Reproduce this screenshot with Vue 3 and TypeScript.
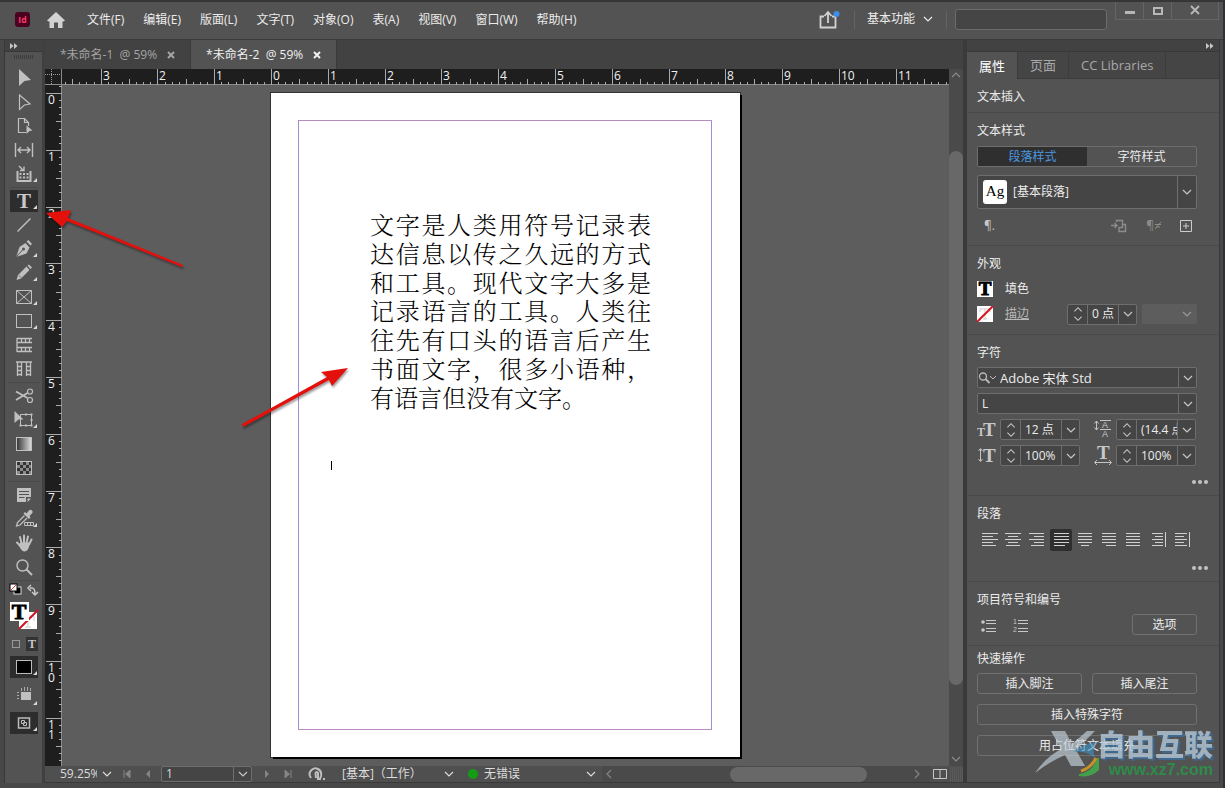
<script setup lang="ts">
import { ref } from 'vue'

interface Tool { id: string; label: string; more?: boolean }
interface Tick { pos: number; size: number; label: string }
interface Glyph { x: number; y: number; size: number; char: string }
interface Metric { label: string; value: string; glyphs: Glyph[]; sans?: boolean; d: string }

const menus = ['文件(F)', '编辑(E)', '版面(L)', '文字(T)', '对象(O)', '表(A)', '视图(V)', '窗口(W)', '帮助(H)']
const docTabs = ['*未命名-1  @ 59%', '*未命名-2  @ 59%']
const activeDoc = ref(1)
const activeTool = ref('type')

const toolGroups: Tool[][] = [
  [
    { id: 'select', label: '选择工具' },
    { id: 'direct', label: '直接选择工具' },
    { id: 'page', label: '页面工具' },
    { id: 'gap', label: '间隙工具' },
    { id: 'collect', label: '内容收集器工具', more: true },
  ],
  [
    { id: 'type', label: '文字工具', more: true },
    { id: 'line', label: '直线工具' },
    { id: 'pen', label: '钢笔工具', more: true },
    { id: 'pencil', label: '铅笔工具', more: true },
    { id: 'frame', label: '矩形框架工具', more: true },
    { id: 'rect', label: '矩形工具', more: true },
    { id: 'hgrid', label: '水平网格工具' },
    { id: 'vgrid', label: '垂直网格工具' },
  ],
  [
    { id: 'scissors', label: '剪刀工具' },
    { id: 'transform', label: '自由变换工具', more: true },
    { id: 'gradient', label: '渐变色板工具' },
    { id: 'feather', label: '渐变羽化工具' },
  ],
  [
    { id: 'note', label: '附注工具' },
    { id: 'dropper', label: '颜色主题工具', more: true },
    { id: 'hand', label: '抓手工具' },
    { id: 'zoom', label: '缩放显示工具' },
  ],
]

const INCH = 56.8
function makeTicks(origin: number, from: number, length: number): Tick[] {
  const list: Tick[] = []
  const to = Math.floor(((length - origin) / INCH) * 8)
  for (let i = from; i <= to; i++) {
    const major = i % 8 === 0
    list.push({
      pos: Math.round(origin + (i * INCH) / 8),
      size: major ? 16 : i % 4 === 0 ? 6 : 3,
      label: major ? String(Math.abs(i / 8)) : '',
    })
  }
  return list
}
const hTicks = makeTicks(209, -29, window.innerWidth - 339)
const vTicks = makeTicks(8, -1, window.innerHeight - 107)

const sample = '文字是人类用符号记录表达信息以传之久远的方式和工具。现代文字大多是记录语言的工具。人类往往先有口头的语言后产生书面文字，很多小语种，有语言但没有文字。'

const aligns = [
  { label: '左对齐', d: 'M4 4.5H20M4 7.5H15M4 10.5H20M4 13.5H15M4 16.5H18' },
  { label: '居中对齐', d: 'M3 4.5H19M6 7.5H16M3 10.5H19M6 13.5H16M4 16.5H18' },
  { label: '右对齐', d: 'M3 4.5H18M8 7.5H18M3 10.5H18M8 13.5H18M5 16.5H18' },
  { label: '双齐末行齐左', d: 'M4 4.5H19M4 7.5H19M4 10.5H19M4 13.5H19M4 16.5H15' },
  { label: '双齐末行居中', d: 'M4 4.5H18M4 7.5H18M4 10.5H18M4 13.5H18M7 16.5H15' },
  { label: '双齐末行齐右', d: 'M4 4.5H18M4 7.5H18M4 10.5H18M4 13.5H18M8 16.5H18' },
  { label: '全部强制双齐', d: 'M4 4.5H18M4 7.5H18M4 10.5H18M4 13.5H18M4 16.5H18' },
  { label: '朝向书脊对齐', d: 'M6 4.5H17M9 7.5H17M6 10.5H17M9 13.5H17M6 16.5H17M19.5 3V18' },
  { label: '背向书脊对齐', d: 'M5 4.5H17M5 7.5H14M5 10.5H17M5 13.5H14M5 16.5H17M19.5 3V18' },
]
const activeAlign = ref(3)
const styleMode = ref(0)

const family = ref('Adobe 宋体 Std')
const face = ref('L')
const metrics = ref<Metric[]>([
  { label: '字体大小', value: '12 点', glyphs: [{ x: 0, y: 17, size: 12, char: 'T' }, { x: 6, y: 17, size: 19, char: 'T' }], d: '' },
  { label: '行距', value: '(14.4 点)', sans: true, glyphs: [{ x: 9, y: 9, size: 9, char: 'A' }, { x: 9, y: 18, size: 9, char: 'A' }], d: 'M7 1.5H18M7 10.5H18M3.5 2V11M1.5 4.5L3.5 2L5.5 4.5M1.5 8.5L3.5 11L5.5 8.5' },
  { label: '垂直缩放', value: '100%', glyphs: [{ x: 6, y: 17, size: 19, char: 'T' }], d: 'M3.5 4V16M1.5 6L3.5 3.5L5.5 6M1.5 14L3.5 16.5L5.5 14' },
  { label: '水平缩放', value: '100%', glyphs: [{ x: 4, y: 14, size: 19, char: 'T' }], d: 'M2 17.5H18M4 15L1.5 17.5L4 20M16 15L18.5 17.5L16 20' },
])
const strokeWidth = ref('0 点')
const zoomLevel = ref('59.25%')
const pageNo = ref('1')
</script>

<template>
  <div class="window" lang="zh-CN">
    <svg class="sheet" aria-hidden="true">
      <symbol id="chev" viewBox="0 0 10 10"><path d="M1 3L5 7L9 3" fill="none" stroke="currentColor" stroke-width="1.2" /></symbol>
      <symbol id="spin" viewBox="0 0 10 20"><path d="M1 7L5 3L9 7M1 13L5 17L9 13" fill="none" stroke="currentColor" stroke-width="1.2" /></symbol>
      <symbol id="dbl" viewBox="0 0 8 8"><path d="M0 1L3.5 4L0 7zM4 1L7.5 4L4 7z" fill="currentColor" /></symbol>
      <symbol id="t-select" viewBox="0 0 30 24"><path d="M10 3L22 14L15.5 15L10 20z" fill="currentColor" /></symbol>
      <symbol id="t-direct" viewBox="0 0 30 24"><path d="M10.5 5L21 14L15.5 15L10.5 19.5z" fill="none" stroke="currentColor" stroke-width="1.2" /></symbol>
      <symbol id="t-page" viewBox="0 0 30 24"><path d="M17 18.5H9.5V4.5H15.5L19.5 8.5V12M15.5 4.5V8.5H19.5" fill="none" stroke="currentColor" stroke-width="1.2" /><path d="M17.5 11.5L23.5 16.5L20.5 17L17.5 20z" fill="currentColor" /></symbol>
      <symbol id="t-gap" viewBox="0 0 30 24"><path d="M6.5 5V19M23.5 5V19M9 12H21M12 9L9 12L12 15M18 9L21 12L18 15" fill="none" stroke="currentColor" stroke-width="1.4" /></symbol>
      <symbol id="t-collect" viewBox="0 0 30 24"><path d="M8.5 9V19H21.5V9" fill="none" stroke="currentColor" stroke-width="2" /><path d="M10.5 11h2v2h-2zM14 11h2v2h-2zM17.5 11h2v2h-2zM10.5 14.5h2v2h-2zM14 14.5h2v2h-2zM17.5 14.5h2v2h-2z" fill="currentColor" /><path d="M10 4L14 8M15 4.5V8.5H11" fill="none" stroke="currentColor" stroke-width="1.4" /></symbol>
      <symbol id="t-line" viewBox="0 0 30 24"><path d="M8.5 18.5L21.5 5.5" stroke="currentColor" stroke-width="1.5" /></symbol>
      <symbol id="t-pen" viewBox="0 0 30 24"><path d="M17.500 4.500L19.500 3L23 7L21.500 8.500z" fill="currentColor" /><path d="M16.5 6L20.5 10.5L17.5 16.5L8.5 19.5L7.5 19L10.5 10z" fill="currentColor" /><path d="M8 19L13.5 13" stroke="#535353" /><circle cx="14.5" cy="12" r="1.5" fill="#535353" /></symbol>
      <symbol id="t-pencil" viewBox="0 0 30 24"><path d="M18.5 4.5L20 3.5L23 6.5L21.5 8zM17.5 5.5L20.5 9L12 17.5L7.5 19L9 14z" fill="currentColor" /><path d="M10 14.5L12 16.5" stroke="#535353" stroke-width=".8" /></symbol>
      <symbol id="t-frame" viewBox="0 0 30 24"><path d="M7.5 5.5H22.5V18.5H7.5zL22.5 18.5M22.5 5.5L7.5 18.5" fill="none" stroke="currentColor" /></symbol>
      <symbol id="t-rect" viewBox="0 0 30 24"><rect x="7.5" y="5.5" width="15" height="13" fill="none" stroke="currentColor" /></symbol>
      <symbol id="t-hgrid" viewBox="0 0 30 24"><path d="M8 5V19M8 5.5H23M8 9.5H23M8 14.5H23M8 18.5H23M12.5 5.5V9.5M16.5 5.5V9.5M20.5 5.5V9.5M12.5 14.5V18.5M16.5 14.5V18.5M20.5 14.5V18.5" fill="none" stroke="currentColor" stroke-width="1.3" /></symbol>
      <symbol id="t-vgrid" viewBox="0 0 30 24"><path d="M7 5H23M8.5 5V19M12.5 5V19M17.5 5V19M21.5 5V19M8.5 9.5H12.5M8.5 13.5H12.5M8.5 17.5H12.5M17.5 9.5H21.5M17.5 13.5H21.5M17.5 17.5H21.5" fill="none" stroke="currentColor" stroke-width="1.3" /></symbol>
      <symbol id="t-scissors" viewBox="0 0 30 24"><path d="M7 7.5L18.5 14M7 16L18.5 9" fill="none" stroke="currentColor" stroke-width="1.8" /><circle cx="21" cy="7.5" r="2.5" fill="none" stroke="currentColor" stroke-width="1.2" /><circle cx="21" cy="16" r="2.5" fill="none" stroke="currentColor" stroke-width="1.2" /></symbol>
      <symbol id="t-transform" viewBox="0 0 30 24"><rect x="11.5" y="6.5" width="11" height="11" fill="none" stroke="currentColor" /><path d="M5.5 3L14.5 11.5H9.5L5.5 15zM21.500 5.500h2v2h-2zM21.500 16.500h2v2h-2zM10.500 16.500h2v2h-2zM16 5.500h2v2h-2zM21.500 11h2v2h-2zM16 16.500h2v2h-2z" fill="currentColor" /></symbol>
      <linearGradient id="ramp"><stop offset="0" stop-color="#333" /><stop offset="1" stop-color="#e0e0e0" /></linearGradient>
      <symbol id="t-gradient" viewBox="0 0 30 24"><rect x="7.5" y="5.5" width="15" height="13" fill="url(#ramp)" stroke="currentColor" /></symbol>
      <symbol id="t-feather" viewBox="0 0 30 24"><rect x="7.5" y="5.5" width="15" height="13" fill="#333" stroke="currentColor" /><path d="M11 6h3v3h-3zM17 6h3v3h-3zM8 9h3v3h-3zM14 9h3v3h-3zM20 9h2v3h-2zM11 12h3v3h-3zM17 12h3v3h-3zM8 15h3v3h-3zM14 15h3v3h-3zM20 15h2v3h-2z" fill="#8c8c8c" /></symbol>
      <symbol id="t-note" viewBox="0 0 30 24"><path d="M8 5H22V14H17V19H8zM18.5 15.5H22L18.5 19z" fill="currentColor" /><path d="M10 8.5H20M10 11.5H20M10 14.5H15.5" stroke="#535353" /></symbol>
      <symbol id="t-dropper" viewBox="0 0 30 24"><path d="M16 5L17.5 6.5L19.5 4Q21.5 2 23 3.5T22.5 7L20.5 9L21.5 10.5L20 12L14.5 6.5z" fill="currentColor" /><path d="M15.5 8.5L8.5 15.5L7.5 19L11 18L18 11" fill="none" stroke="currentColor" stroke-width="1.3" /><path d="M15.5 15.5H24.5V18.5H15.5zM18.5 15.5V18.5M21.5 15.5V18.5" fill="none" stroke="currentColor" /></symbol>
      <symbol id="t-hand" viewBox="0 0 30 24"><path d="M12.5 12L11 6M15 11.5V4.5M17.5 12L19 5.5M20 13.5L22.5 8.5M11.5 15L8 11.5" stroke="currentColor" stroke-width="2" stroke-linecap="round" /><path d="M11.5 11.5H20.5L20 16Q18.5 20.5 15 20.5Q12.5 20 9.5 14z" fill="currentColor" /></symbol>
      <symbol id="t-zoom" viewBox="0 0 30 24"><circle cx="13.5" cy="10.5" r="5.5" fill="none" stroke="currentColor" stroke-width="1.4" /><path d="M17.5 14.5L23 20" stroke="currentColor" stroke-width="2" /></symbol>
    </svg>

    <header class="menubar">
      <svg class="logo" viewBox="0 0 14 14" aria-label="InDesign"><rect width="14" height="14" rx="3" fill="#4a0220" /><text x="7" y="10" text-anchor="middle" font-size="8" font-weight="bold" font-family="Open Sans, sans-serif" fill="#ff3a6c">Id</text></svg>
      <button class="plain home" aria-label="主页"><svg width="18" height="16" viewBox="0 0 18 16"><path d="M9 0L18 8.5L16.5 9.5H15.5V16H11V10.5H7V16H2.5V9.5H1.5L0 8.5z" fill="#d2d2d2" /></svg></button>
      <nav class="menus"><button v-for="m in menus" :key="m" class="plain">{{ m }}</button></nav>
      <div class="right-tools">
        <button class="plain share" aria-label="共享"><svg width="22" height="20" viewBox="0 0 22 20"><path d="M6 6.5H2.5V17.5H17.5V6.5H14M10 13V3M6.5 6L10 2L13.5 6" fill="none" stroke="#d2d2d2" stroke-width="1.8" /><circle cx="18.5" cy="4" r="3" fill="#3b8eea" /></svg></button>
        <span class="bar"></span>
        <button class="plain workspace">基本功能<svg width="10" height="10"><use href="#chev" /></svg></button>
        <span class="bar"></span>
        <input class="search" type="search" aria-label="搜索" />
        <div class="winbtns">
          <button aria-label="最小化"><svg width="12" height="12" viewBox="0 0 12 12"><rect x="1" y="6" width="10" height="3" fill="#b8b8b8" /></svg></button>
          <button aria-label="最大化"><svg width="12" height="12" viewBox="0 0 12 12"><rect x="2" y="3" width="8" height="6" fill="none" stroke="#b8b8b8" stroke-width="2" /></svg></button>
          <button class="close" aria-label="关闭"><svg width="12" height="12" viewBox="0 0 12 12"><path d="M2 1L10 9M10 1L2 9" stroke="#b8b8b8" stroke-width="1.8" /></svg></button>
        </div>
      </div>
    </header>

    <div class="body">
      <aside class="toolbar">
        <div class="collapse"><svg width="8" height="8"><use href="#dbl" /></svg></div>
        <div class="grip"></div>
        <div v-for="(g, gi) in toolGroups" :key="gi" class="group">
          <button v-for="t in g" :key="t.id" class="tool" :class="{ on: activeTool === t.id }" :aria-label="t.label" @click="activeTool = t.id">
            <svg width="30" height="24">
              <text v-if="t.id === 'type'" class="slab" x="15" y="19" text-anchor="middle" font-size="21">T</text>
              <use v-else :href="'#t-' + t.id" />
              <path v-if="t.more" d="M28 16V20H24z" fill="#d8d8d8" />
            </svg>
          </button>
        </div>
        <div class="swatches">
          <svg width="30" height="50" viewBox="0 0 30 50" role="img" aria-label="填色和描边">
            <rect x="5" y="5" width="7" height="7" fill="#000" stroke="#ddd" /><rect x="1" y="2" width="7" height="7" fill="#fff" stroke="#000" /><path d="M2 8L7 3" stroke="#e03a3a" />
            <path d="M21 6H23Q26 6 26 12M22 3L19 6L22 9M23 10L26 13L29 10" fill="none" stroke="#c8c8c8" stroke-width="1.5" />
            <rect x="10" y="30" width="18" height="17" fill="#fff" /><path d="M13 34H25V39M19 34V45M16 45H22" fill="none" stroke="#ccc" /><path d="M10 47L29 28" stroke="#d01020" stroke-width="2" />
            <rect x="1" y="20" width="19" height="19" fill="#fff" /><text class="slab" x="10" y="37" text-anchor="middle" font-size="22" fill="#000" stroke="#000">T</text>
          </svg>
        </div>
        <div class="target">
          <button aria-label="格式针对容器"><svg width="12" height="12" viewBox="0 0 12 12"><rect x="2.5" y="2.5" width="7" height="7" fill="none" stroke="#999" /></svg></button>
          <button class="on" aria-label="格式针对文本"><svg width="12" height="12" viewBox="0 0 12 12"><text class="slab" x="6" y="10" text-anchor="middle" font-size="12">T</text></svg></button>
        </div>
        <button class="tool fill on" aria-label="应用颜色"><svg width="30" height="24" viewBox="0 0 30 24"><rect x="7.5" y="5.5" width="15" height="13" fill="#000" stroke="#bbb" /><path d="M28 16V20H24z" fill="#d8d8d8" /></svg></button>
        <button class="tool fill" aria-label="视图选项"><svg width="30" height="24" viewBox="0 0 30 24"><path d="M12 9H22V17H12z" fill="#c0c0c0" /><path d="M12.5 5V8M15.5 4V8M18.5 4V8M21.5 5V8M8 9.5H10M8 12.5H10M8 15.5H10" stroke="#aaa" /><path d="M28 18V22H24z" fill="#d8d8d8" /></svg></button>
        <button class="tool fill on" aria-label="屏幕模式"><svg width="30" height="24" viewBox="0 0 30 24"><rect x="9.5" y="7" width="11" height="10" fill="none" stroke="#bbb" stroke-width="1.5" /><path d="M12.5 9.5H15.5V12.5H12.5zM14.5 11.5H17.5V14.5H14.500z" fill="none" stroke="#bbb" /><path d="M28 16V20H24z" fill="#d8d8d8" /></svg></button>
      </aside>

      <main class="doc">
        <div class="doctabs">
          <div v-for="(d, i) in docTabs" :key="d" class="doctab" :class="{ on: activeDoc === i }">
            <button class="plain name" @click="activeDoc = i">{{ d }}</button>
            <button class="plain x" aria-label="关闭文档"><svg width="8" height="8" viewBox="0 0 8 8"><path d="M1 1L7 7M7 1L1 7" stroke="currentColor" stroke-width="2" /></svg></button>
          </div>
        </div>
        <div class="work">
          <svg class="corner" viewBox="0 0 17 16"><path d="M0 5.5H17M6.5 0V16" stroke="#999" stroke-dasharray="1 1" /><path d="M16.5 0V16M0 15.5H17" stroke="#8c8c8c" /></svg>
          <svg class="hruler">
            <line x1="0" x2="100%" y1="15.5" y2="15.5" stroke="#8c8c8c" />
            <g v-for="t in hTicks" :key="t.pos"><rect :x="t.pos" :y="16 - t.size" width="1" :height="t.size" fill="#aaa" /><text v-if="t.label" :x="t.pos + 2" y="11">{{ t.label }}</text></g>
          </svg>
          <div class="vscroll">
            <svg width="10" height="10" class="flip"><use href="#chev" /></svg>
            <div class="vthumb"></div>
            <svg width="10" height="10"><use href="#chev" /></svg>
          </div>
          <svg class="vruler">
            <line x1="16.5" x2="16.5" y1="0" y2="100%" stroke="#8c8c8c" />
            <g v-for="t in vTicks" :key="t.pos"><rect :x="17 - t.size" :y="t.pos" :width="t.size" height="1" fill="#aaa" /><text v-for="(c, ci) in t.label" :key="ci" x="3" :y="t.pos + 11 + ci * 10">{{ c }}</text></g>
          </svg>
          <div class="canvas">
            <article class="sheet-page">
              <div class="margins">
                <p class="story">{{ sample }}</p>
                <div class="caret"></div>
              </div>
            </article>
          </div>
        </div>
        <footer class="status">
          <input v-model="zoomLevel" class="zoomlevel" aria-label="缩放级别" />
          <button class="plain" aria-label="缩放列表"><svg width="10" height="10"><use href="#chev" /></svg></button>
          <div class="pager">
            <button class="plain" aria-label="首页"><svg width="8" height="8" viewBox="0 0 8 8"><path d="M1 0V8M7 0V8L2.5 4z" fill="#858585" stroke="#858585" /></svg></button>
            <button class="plain" aria-label="上一页"><svg width="8" height="8" viewBox="0 0 8 8"><path d="M6 0V8L2 4z" fill="#858585" /></svg></button>
          </div>
          <div class="combo pageno"><input v-model="pageNo" aria-label="页码" /><button aria-label="页码列表"><svg width="10" height="10"><use href="#chev" /></svg></button></div>
          <div class="pager">
            <button class="plain" aria-label="下一页"><svg width="8" height="8" viewBox="0 0 8 8"><path d="M2 0V8L6 4z" fill="#858585" /></svg></button>
            <button class="plain" aria-label="末页"><svg width="8" height="8" viewBox="0 0 8 8"><path d="M7 0V8M1 0V8L5.5 4z" fill="#858585" stroke="#858585" /></svg></button>
          </div>
          <button class="plain open" aria-label="打开"><svg width="18" height="14" viewBox="0 0 18 14"><path d="M3 11Q0 7 3 3.5T10 2Q14 4 13 9L12 12H10V6Q9 4 7.5 6L8 11" fill="none" stroke="#bdbdbd" stroke-width="2" /><rect x="15" y="11" width="2" height="2" fill="#bdbdbd" /></svg></button>
          <button class="plain profile">[基本]（工作）<svg width="10" height="10"><use href="#chev" /></svg></button>
          <button class="plain preflight"><span class="dot"></span>无错误<svg width="10" height="10"><use href="#chev" /></svg></button>
          <div class="hscroll">
            <svg width="10" height="10" class="left"><use href="#chev" /></svg>
            <div class="hthumb"></div>
            <svg width="10" height="10" class="rightw"><use href="#chev" /></svg>
          </div>
          <button class="plain split" aria-label="拆分版面视图"><svg width="16" height="12" viewBox="0 0 16 12"><path d="M1.5 1.5H14.5V10.5H1.5zM8 1.5V10.5" fill="none" stroke="#c8c8c8" /></svg></button>
          <div class="resize"></div>
        </footer>
        <svg class="arrows" viewBox="0 0 400 460" aria-hidden="true">
          <g fill="#e4100c">
            <path d="M1 173L26 170L23 178L138 225L137 227L22 181L17 187z" />
            <path d="M303 328L287 346L284 340L198 387L197 384L282 337L276 332z" />
          </g>
        </svg>
      </main>

      <aside class="panel">
        <div class="collapse end"><svg width="8" height="8"><use href="#dbl" /></svg></div>
        <div class="ptabs"><button class="on">属性</button><button>页面</button><button>CC Libraries</button></div>

        <section class="first"><h2>文本插入</h2></section>

        <section>
          <h2>文本样式</h2>
          <div class="seg">
            <button :class="{ on: styleMode === 0 }" @click="styleMode = 0">段落样式</button>
            <button :class="{ on: styleMode === 1 }" @click="styleMode = 1">字符样式</button>
          </div>
          <label class="pick">
            <span class="ag">Ag</span>
            <select aria-label="段落样式"><option>[基本段落]</option></select>
            <span class="drop"><svg width="10" height="10"><use href="#chev" /></svg></span>
          </label>
          <div class="style-actions">
            <button class="plain pil" aria-label="段落选项">¶.</button>
            <button class="plain dim push" aria-label="重新定义样式"><svg width="18" height="16" viewBox="0 0 18 16"><path d="M1 7.5H7M4.5 5L7 7.5L4.5 10M6.5 4V2.5H12.5V9.5H9M9 9V13.5H15.5V6.5H13" fill="none" stroke="currentColor" stroke-width="1.4" /></svg></button>
            <button class="plain dim" aria-label="清除优先选项"><span>¶</span><svg width="8" height="10" viewBox="0 0 8 10"><path d="M1 8L7 1M1 3.5H7M2 6H6" stroke="currentColor" /></svg></button>
            <button class="plain" aria-label="新建样式"><svg width="12" height="12" viewBox="0 0 12 12"><path d="M.5 .5H11.5V11.5H.5zM6 3V9M3 6H9" fill="none" stroke="#ccc" /></svg></button>
          </div>
        </section>

        <section>
          <h2>外观</h2>
          <div class="look">
            <svg width="16" height="16" viewBox="0 0 16 16"><rect width="16" height="16" fill="#fff" /><text class="slab" x="8" y="14" text-anchor="middle" font-size="19" fill="#000" stroke="#000">T</text></svg>
            <button class="plain">填色</button>
          </div>
          <div class="look">
            <svg width="16" height="16" viewBox="0 0 16 16"><rect width="16" height="16" fill="#fff" /><path d="M3 6V3H13V6M8 3V13M6 13H10" fill="none" stroke="#ccc" /><path d="M0 16L16 0" stroke="#d81420" stroke-width="2" /></svg>
            <a class="strokelink" href="#">描边</a>
            <div class="combo weight"><button class="spin" aria-label="微调描边"><svg width="10" height="18"><use href="#spin" /></svg></button><input v-model="strokeWidth" aria-label="描边粗细" /><button aria-label="描边粗细列表"><svg width="10" height="10"><use href="#chev" /></svg></button></div>
            <button class="disabled" disabled aria-label="描边类型"><svg width="10" height="10"><use href="#chev" /></svg></button>
          </div>
        </section>

        <section class="chars">
          <h2>字符</h2>
          <div class="combo full"><span class="find"><svg width="20" height="14" viewBox="0 0 20 14"><circle cx="5" cy="5.5" r="3.5" fill="none" stroke="#bbb" stroke-width="1.3" /><path d="M7.5 8L11.5 12" stroke="#bbb" stroke-width="1.8" /><path d="M12 5L15 8L18 5" fill="none" stroke="#bbb" /></svg></span><input v-model="family" aria-label="字体" /><button aria-label="字体列表"><svg width="10" height="10"><use href="#chev" /></svg></button></div>
          <div class="combo full"><input v-model="face" aria-label="字体样式" /><button aria-label="字体样式列表"><svg width="10" height="10"><use href="#chev" /></svg></button></div>
          <div class="metrics">
            <div v-for="m in metrics" :key="m.label" class="metric">
              <svg width="20" height="20">
                <text v-for="g in m.glyphs" :key="g.y + g.size" :class="m.sans ? 'plainface' : 'slab'" :x="g.x" :y="g.y" :font-size="g.size">{{ g.char }}</text>
                <path :d="m.d" fill="none" stroke="currentColor" />
              </svg>
              <div class="combo"><button class="spin" :aria-label="'微调' + m.label"><svg width="10" height="18"><use href="#spin" /></svg></button><input v-model="m.value" :aria-label="m.label" /><button :aria-label="m.label + '列表'"><svg width="10" height="10"><use href="#chev" /></svg></button></div>
            </div>
          </div>
          <button class="plain more" aria-label="更多选项"><i></i><i></i><i></i></button>
        </section>

        <section class="para">
          <h2>段落</h2>
          <div class="aligns">
            <button v-for="(a, i) in aligns" :key="a.label" :class="{ on: activeAlign === i }" :aria-label="a.label" @click="activeAlign = i"><svg width="22" height="22" viewBox="0 0 22 22"><path :d="a.d" fill="none" stroke="#d0d0d0" /></svg></button>
          </div>
          <button class="plain more" aria-label="更多选项"><i></i><i></i><i></i></button>
        </section>

        <section class="lists">
          <h2>项目符号和编号</h2>
          <div class="listrow">
            <button class="plain" aria-label="项目符号"><svg width="18" height="16" viewBox="0 0 18 16"><path d="M6 3.5H16M6 6.5H16M6 11.5H16M6 14.5H16" stroke="#c8c8c8" /><circle cx="3" cy="5" r="1.8" fill="#c8c8c8" /><circle cx="3" cy="13" r="1.8" fill="#c8c8c8" /></svg></button>
            <button class="plain" aria-label="编号"><svg width="18" height="16" viewBox="0 0 18 16"><path d="M6 3.5H16M6 6.5H16M6 11.5H16M6 14.5H16" stroke="#c8c8c8" /><text class="plainface" x="1" y="7" font-size="7">1</text><text class="plainface" x="1" y="15" font-size="7">2</text></svg></button>
            <button class="btn opts">选项</button>
          </div>
        </section>

        <section class="quick">
          <h2>快速操作</h2>
          <div class="btns">
            <button class="btn">插入脚注</button>
            <button class="btn">插入尾注</button>
            <button class="btn wide">插入特殊字符</button>
            <button class="btn wide">用占位符文本填充</button>
          </div>
        </section>

        <div class="brand">
          <svg width="64" height="50" viewBox="0 0 64 50"><path d="M16 3H30L37 16L52 3H60L41 22L50 38H36L30 27Q14 34 0 45Q10 30 26 21z" fill="#c4d3dc" opacity=".65" /><path d="M38 24Q50 22 60 30Q56 18 64 14Q50 14 38 24z" fill="#3e94c8" opacity=".6" /><path d="M44 46Q58 44 62 30H64V42Q56 50 44 48z" fill="#45a04c" /><path d="M46 43Q56 40 61 30" stroke="#c89028" stroke-width="3" fill="none" /></svg>
          <div class="words"><b>自由互联</b><span>www.xz7.com</span></div>
        </div>
      </aside>
    </div>
  </div>
</template>

<style>
html, body { margin: 0; background: #2c2c2e; }
</style>

<style scoped>
* { box-sizing: border-box; }
.window {
  height: 100vh; min-height: 788px; display: flex; flex-direction: column;
  padding: 0 3px 5px 4px; background: #484848; color: #ececec; overflow: hidden;
  border-top: 2px solid #363636; border-right: 2px solid #303038;
  font: 12px/18px "Open Sans", "Noto Sans CJK SC", sans-serif;
}
.sheet { position: absolute; width: 0; height: 0; }
svg { display: block; flex: none; }
.slab { font-family: "Liberation Serif", serif; font-weight: bold; }
.plainface { font-family: "Liberation Sans", sans-serif; }
.tool .slab, .target .slab, .metric text, .plainface { fill: #c8c8c8; }
button, input, select { font: inherit; color: inherit; margin: 0; padding: 0; border: 0; background: none; border-radius: 0; outline: none; min-width: 0; }
button { display: flex; align-items: center; justify-content: center; }
.plain { white-space: nowrap; }

.menubar { height: 38px; flex: none; display: flex; align-items: center; margin: 0 -3px 0 -4px; padding: 0 4px 2px 15px; background: #535353; border-bottom: 1px solid #3a3a3a; }
.logo { width: 15px; height: 15px; }
.home { margin-left: 17px; }
.menus { display: flex; gap: 19px; margin-left: 22px; }
.right-tools { margin-left: auto; display: flex; align-items: center; align-self: stretch; }
.bar { width: 1px; height: 18px; background: #646464; }
.share { margin-right: 14px; }
.workspace { gap: 8px; padding: 0 13px 2px 12px; }
.search { width: 152px; height: 21px; margin: 0 8px; padding: 0 6px; background: #454545; border: 1px solid #6c6c6c; border-radius: 3px; appearance: none; }
.winbtns { display: flex; align-self: flex-start; border: 1px solid #646464; border-top: 0; }
.winbtns button { width: 28px; height: 17px; border-right: 1px solid #646464; }
.winbtns .close { width: 46px; border-right: 0; }

.body { flex: 1; min-height: 0; display: flex; }
.collapse { height: 12px; flex: none; display: flex; align-items: center; align-self: stretch; padding: 0 5px; background: #424242; border-bottom: 1px solid #383838; color: #c8c8c8; }
.collapse.end { justify-content: flex-end; }

.toolbar { width: 41px; flex: none; display: flex; flex-direction: column; align-items: center; background: #535353; border-left: 1px solid #383838; border-right: 3px solid #404040; }
.grip { width: 20px; height: 4px; margin: 3px 0 7px; background: repeating-linear-gradient(90deg, #3c3c3c 0 1px, #535353 1px 2px); }
.group { border-bottom: 1px solid #494949; padding-bottom: 1px; margin-bottom: 1px; }
.tool { width: 30px; height: 24px; color: #c0c0c0; }
.tool.on { background: linear-gradient(#2d2d2d, #2d2d2d) center / 28px 22px no-repeat; }
.target { display: flex; gap: 4px; margin: 5px 0 4px; }
.target button { width: 12px; height: 14px; }
.target .on { background: #333; }
.tool.fill { margin-bottom: 4px; }

.doc { position: relative; flex: 1; min-width: 0; display: flex; flex-direction: column; border-right: 4px solid #3a3a3a; }
.doctabs { height: 29px; flex: none; display: flex; background: #424242; }
.doctab { display: flex; align-items: center; gap: 10px; padding: 0 15px; border-right: 1px solid #3a3a3a; color: #a4a4a4; }
.doctab.on { background: #535353; color: #f0f0f0; }
.name { white-space: pre; }
.work { flex: 1; min-height: 0; display: grid; grid-template: 16px 1fr / 17px 1fr 14px; }
.corner { width: 17px; height: 16px; background: #1e1e1e; }
.hruler { width: 100%; height: 16px; background: #1e1e1e; overflow: hidden; }
.vruler { width: 17px; height: 100%; background: #1e1e1e; overflow: hidden; }
.hruler text, .vruler text { fill: #f0f0f0; font-size: 12px; }
.canvas { background: #5d5d5d; overflow: hidden; padding: 8px 0 0 209px; }
.sheet-page { width: 469px; height: 664px; padding: 27px 28px 27px 27px; background: #fff; box-shadow: 2px 2px 0 #000, 0 0 0 1px #333; display: flex; }
.margins { flex: 1; border: 1px solid; border-color: #b88cc0 #a48cd8; padding: 91px 0 0 71px; }
.story { width: 281px; margin: 0; color: #000; text-align: justify; font: 300 24px/1.2 "Liberation Serif", "Noto Serif CJK SC", "Noto Sans CJK SC", serif; }
.caret { width: 1px; height: 9px; margin: 47px 0 0 -39px; background: #000; }
.vscroll { grid-column: 3; grid-row: 1 / 3; background: #4a4a4a; color: #8c8c8c; display: flex; flex-direction: column; align-items: center; padding: 1px 0 2px; }
.vthumb { width: 14px; flex: 534; background: #686868; border-radius: 7px; margin: 71px 0 69px; }
.flip { transform: rotate(180deg); }
.left { transform: rotate(90deg); }
.rightw { transform: rotate(-90deg); }

.status { height: 17px; flex: none; display: flex; align-items: center; padding-left: 15px; background: #4f4f4f; border-bottom: 1px solid #3a3a3a; color: #dcdcdc; line-height: 16px; }
.zoomlevel { width: 37px; height: 16px; margin-right: 5px; }
.pager { display: flex; gap: 13px; padding: 0 9px 0 11px; }
.combo { display: flex; height: 21px; background: #454545; border: 1px solid #6e6e6e; border-radius: 2px; }
.combo input { flex: 1; width: 0; padding-left: 4px; }
.combo button { width: 18px; border-left: 1px solid #6e6e6e; color: #c8c8c8; }
.combo button.spin { width: 20px; border-left: 0; border-right: 1px solid #6e6e6e; }
.pageno { width: 91px; height: 16px; }
.open { margin: 0 16px 0 7px; }
.profile { width: 112px; justify-content: space-between; margin-right: 14px; }
.preflight { width: 128px; }
.preflight svg { margin-left: auto; }
.dot { width: 10px; height: 10px; border-radius: 50%; background: #149c14; margin-right: 6px; }
.hscroll { flex: 1; display: flex; align-items: center; height: 16px; margin-left: 6px; padding: 0 8px 0 2px; background: #4a4a4a; color: #858585; }
.hthumb { flex: 139; height: 15px; border-radius: 8px; background: #686868; margin: 0 45px 0 116px; }
.split { margin: 0 2px; }
.resize { width: 13px; height: 15px; background: repeating-linear-gradient(90deg, #5a5a5a 0 1px, #4f4f4f 1px 2px); }
.arrows { position: absolute; left: 0; top: 0; width: 400px; height: 460px; pointer-events: none; filter: drop-shadow(1px 2px 1px rgba(0, 0, 0, .4)); }

.panel { position: relative; width: 253px; flex: none; background: #535353; border-right: 1px solid #383838; border-bottom: 1px solid #3a3a3a; }
.ptabs { display: flex; height: 27px; background: #454545; border-bottom: 1px solid #3c3c3c; }
.ptabs button { padding: 0 12px; font-size: 13px; color: #a8a8a8; border-right: 1px solid #3c3c3c; }
.ptabs .on { height: 27px; background: #535353; color: #fff; }
section { padding: 9px 22px 10px 10px; border-bottom: 1px solid #494949; }
section.first { padding-bottom: 6px; }
h2 { margin: 0; font: inherit; }
.seg { display: flex; height: 21px; margin-top: 6px; border: 1px solid #6e6e6e; border-radius: 2px; }
.seg button { flex: 1; }
.seg .on { background: #2f2f2f; color: #4b97e0; }
.pick { display: flex; align-items: center; height: 34px; margin-top: 8px; padding-left: 5px; background: #454545; border: 1px solid #6e6e6e; border-radius: 2px; }
.pick select { flex: 1; appearance: none; padding-left: 6px; }
.ag { width: 24px; height: 24px; border-radius: 3px; background: #fff; color: #000; text-align: center; font: 15px/23px "Liberation Serif", serif; }
.drop { width: 19px; align-self: stretch; display: flex; align-items: center; justify-content: center; border-left: 1px solid #6e6e6e; color: #c8c8c8; }
.style-actions { display: flex; align-items: center; height: 18px; margin-top: 8px; padding: 0 5px 0 7px; gap: 18px; color: #c8c8c8; }
.push { margin-left: auto; }
.dim { color: #8c8c8c; }
.look { display: flex; align-items: center; height: 20px; margin-top: 6px; }
.look + .look { margin-top: 5px; }
.look > button.plain, .strokelink { margin-left: 12px; }
.strokelink { color: #b8b8b8; text-decoration: underline; }
.weight { width: 70px; margin-left: auto; }
.disabled { width: 55px; height: 20px; margin-left: 5px; background: #5d5d5d; color: #999; justify-content: flex-end; padding-right: 5px; border-radius: 2px; }
.chars, .para { padding-bottom: 4px; }
.full { margin-top: 5px; }
.full .find { align-self: center; }
.chars h2 + .full input { padding-left: 2px; font-size: 13px; }
.metrics { display: grid; grid-template-columns: 103px 103px; column-gap: 13px; row-gap: 5px; margin-top: 5px; }
.metric { display: flex; gap: 3px; color: #c4c4c4; }
.metric .combo { flex: 1; min-width: 0; color: #ececec; }
.more { gap: 2px; height: 18px; margin: 7px -11px 0 auto; }
.more i { width: 4px; height: 4px; border-radius: 50%; background: #c4c4c4; }
.aligns { display: flex; margin: 6px -10px 8px 1px; gap: 2px; }
.aligns button { width: 22px; height: 22px; border-radius: 2px; }
.aligns .on { background: #2f2f2f; }
.listrow { display: flex; align-items: center; gap: 14px; margin-top: 5px; padding-left: 3px; }
.btn { height: 21px; border: 1px solid #707070; border-radius: 3px; }
.opts { width: 65px; margin-left: auto; }
.quick { padding-top: 4px; border-bottom: 0; }
.btns { display: grid; grid-template-columns: 1fr 1fr; gap: 10px; margin-top: 5px; }
.wide { grid-column: 1 / 3; }
.brand { position: absolute; right: 6px; bottom: 4px; display: flex; pointer-events: none; }
.words { display: flex; flex-direction: column; margin-left: -2px; }
.words b { color: #b4c8d8; opacity: .8; font-size: 29px; line-height: 34px; font-weight: 900; text-shadow: 2px 2px 0 #386c9c; }
.words span { align-self: flex-end; color: #2f8a4a; font: bold 16px/16px "Liberation Sans", sans-serif; }
</style>
